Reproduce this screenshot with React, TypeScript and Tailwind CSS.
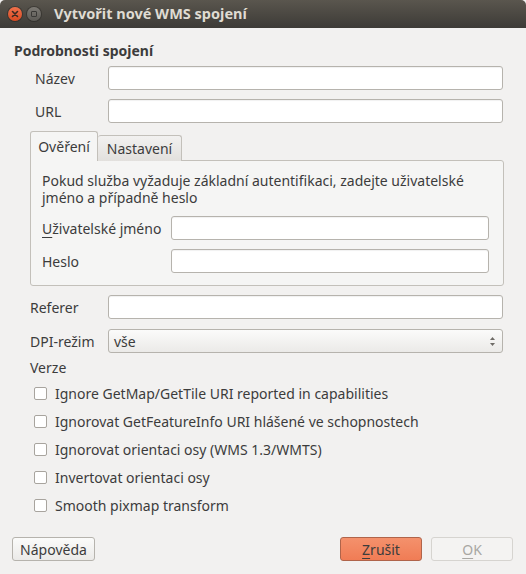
import React from "react";

const font = { fontFamily: '"Noto Sans", "DejaVu Sans", sans-serif' };

function Input({ className = "" }: { className?: string }) {
  return (
    <div
      className={`h-[24px] rounded-[3px] border border-[#b6b3ad] bg-white shadow-[inset_0_1px_1px_rgba(0,0,0,0.06)] ${className}`}
    />
  );
}

function Check({ label }: { label: string }) {
  return (
    <div className="flex h-[28px] items-center">
      <div className="ml-[34px] h-[13px] w-[13px] rounded-[2px] border border-[#a8a49e] bg-white" />
      <span className="ml-[8px]">{label}</span>
    </div>
  );
}

export default function App() {
  return (
    <div
      className="relative h-[574px] w-[526px] overflow-hidden bg-[#f2f1f0] text-[14px] text-[#3c3c3c]"
      style={font}
    >
      {/* title bar */}
      <div className="flex h-[28px] items-center rounded-t-[5px] bg-gradient-to-b from-[#5a564e] to-[#3d3b37]">
        <div className="ml-[8px] flex h-[14px] w-[14px] items-center justify-center rounded-full bg-gradient-to-b from-[#f0714b] to-[#d84a20] shadow-[0_0_0_1px_rgba(0,0,0,0.25)]">
          <svg width="8" height="8" viewBox="0 0 8 8">
            <path d="M1.5 1.5 L6.5 6.5 M6.5 1.5 L1.5 6.5" stroke="#3a2a22" strokeWidth="1.6" strokeLinecap="round" />
          </svg>
        </div>
        <div className="ml-[5px] flex h-[14px] w-[14px] items-center justify-center rounded-full bg-gradient-to-b from-[#7d7a74] to-[#5c5a55] shadow-[0_0_0_1px_rgba(0,0,0,0.25)]">
          <div className="h-[6px] w-[6px] rounded-[1px] border-[1.5px] border-[#3a3936]" />
        </div>
        <span className="ml-[13px] text-[14.5px] font-bold text-[#dfdbd2]">Vytvořit nové WMS spojení</span>
      </div>

      <div className="px-[14px] pt-[13px]">
        <div className="h-[20px] font-bold leading-[20px]">Podrobnosti spojení</div>

        <div className="mt-[5px] flex h-[24px] items-center">
          <span className="ml-[21px] w-[73px]">Název</span>
          <Input className="ml-0 w-[395px]" />
        </div>
        <div className="mt-[9px] flex h-[24px] items-center">
          <span className="ml-[21px] w-[73px]">URL</span>
          <Input className="w-[395px]" />
        </div>

        {/* tabs */}
        <div className="ml-[16px] mt-[8px] w-[474px]">
          <div className="flex h-[30px] items-end">
            <div className="relative z-10 flex h-[30px] w-[68px] items-center justify-center rounded-t-[3px] border border-b-0 border-[#c3c0ba] bg-[#f5f5f4]">
              Ověření
            </div>
            <div className="flex h-[26px] w-[84px] items-center justify-center rounded-t-[3px] border border-b-0 border-l-0 border-[#c3c0ba] bg-gradient-to-b from-[#f2f1f0] to-[#e2e0dd]">
              Nastavení
            </div>
          </div>
          <div className="-mt-px h-[126px] rounded-b-[3px] rounded-tr-[3px] border border-[#c3c0ba] bg-[#f5f5f4] px-[11px] pt-[11px]">
            <div className="leading-[17px]">
              Pokud služba vyžaduje základní autentifikaci, zadejte uživatelské jméno a případně heslo
            </div>
            <div className="mt-[10px] flex h-[24px] items-center">
              <span className="w-[129px]">
                <span className="underline underline-offset-[3px]">U</span>živatelské jméno
              </span>
              <Input className="w-[318px]" />
            </div>
            <div className="mt-[9px] flex h-[24px] items-center">
              <span className="w-[129px]">Heslo</span>
              <Input className="w-[318px]" />
            </div>
          </div>
        </div>

        <div className="mt-[9px] flex h-[24px] items-center">
          <span className="ml-[16px] w-[78px]">Referer</span>
          <Input className="w-[395px]" />
        </div>
        <div className="mt-[10px] flex h-[24px] items-center">
          <span className="ml-[16px] w-[78px]">DPI-režim</span>
          <div className="relative flex h-[24px] w-[395px] items-center rounded-[3px] border border-[#b6b3ad] bg-gradient-to-b from-[#fbfbfa] to-[#ebeae8] pl-[5px]">
            vše
            <svg className="absolute right-[6px] top-[6px]" width="7" height="11" viewBox="0 0 7 11">
              <path d="M3.5 1 L6 4 H1 Z" fill="#6e6b66" />
              <path d="M3.5 10 L6 7 H1 Z" fill="#6e6b66" />
            </svg>
          </div>
        </div>
        <div className="ml-[16px] mt-[5px] h-[20px] leading-[20px]">Verze</div>
        <div className="-ml-[14px] mt-[1px]">
          <Check label="Ignore GetMap/GetTile URI reported in capabilities" />
          <Check label="Ignorovat GetFeatureInfo URI hlášené ve schopnostech" />
          <Check label="Ignorovat orientaci osy (WMS 1.3/WMTS)" />
          <Check label="Invertovat orientaci osy" />
          <Check label="Smooth pixmap transform" />
        </div>
      </div>

      {/* buttons */}
      <div className="absolute bottom-[13px] left-[12px] right-[13px] flex items-center">
        <div className="flex h-[24px] w-[83px] items-center justify-center rounded-[3px] border border-[#b6b3ad] bg-gradient-to-b from-[#fbfbfa] to-[#ebeae8]">
          Nápověda
        </div>
        <div className="flex-1" />
        <div className="flex h-[24px] w-[82px] items-center justify-center rounded-[3px] border border-[#b0644a] bg-gradient-to-b from-[#f4916c] to-[#f07c55] text-[#3c3c3c]">
          <span className="underline underline-offset-[3px]">Z</span>rušit
        </div>
        <div className="ml-[9px] flex h-[24px] w-[82px] items-center justify-center rounded-[3px] border border-[#d6d4d0] bg-[#f4f3f2] text-[#a9a7a3]">
          <span className="underline underline-offset-[3px]">O</span>K
        </div>
      </div>
    </div>
  );
}
